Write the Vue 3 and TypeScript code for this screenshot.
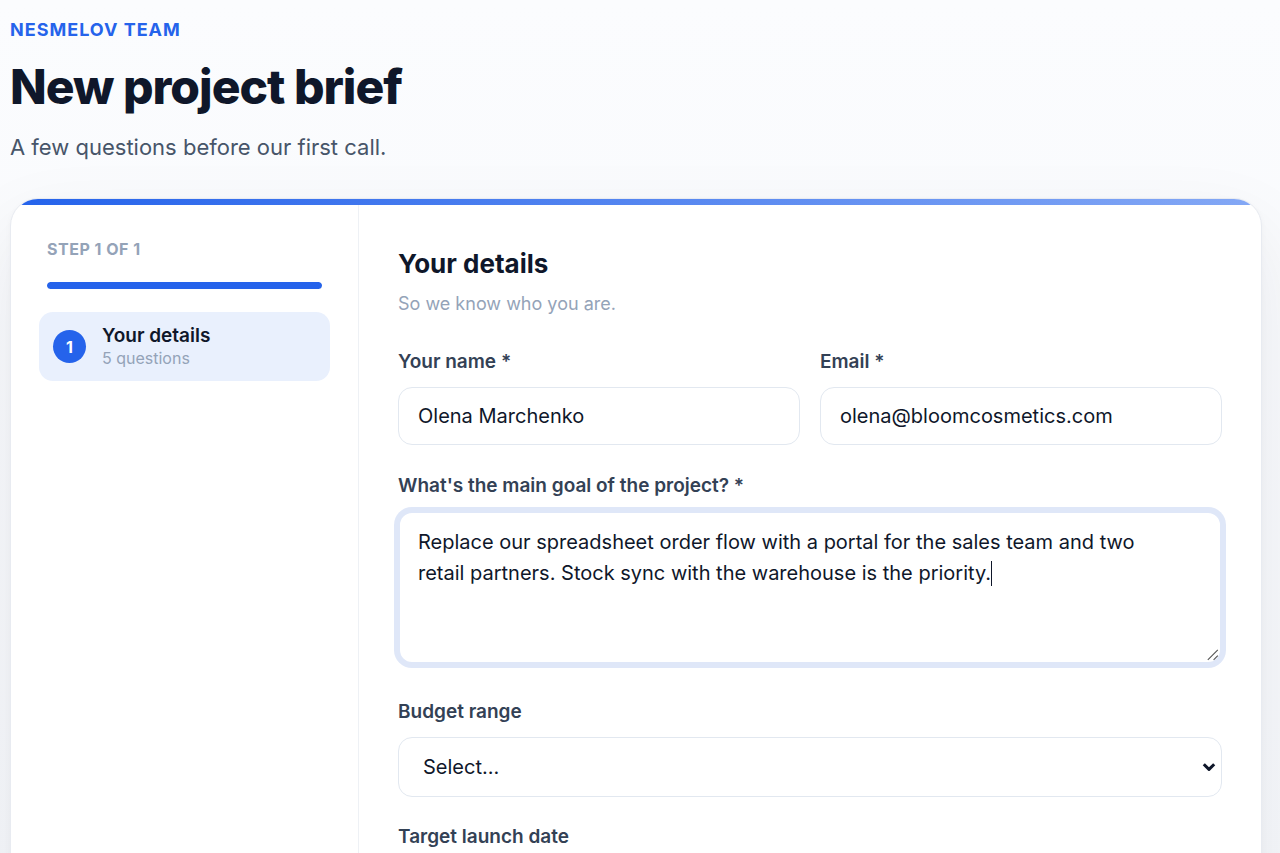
<script setup lang="ts">
import { ref } from 'vue'

interface Step {
  title: string
  note: string
}

const steps: Step[] = [{ title: 'Your details', note: '5 questions' }]
const current = ref(0)

const name = ref('Olena Marchenko')
const email = ref('olena@bloomcosmetics.com')
const goal = ref(
  'Replace our spreadsheet order flow with a portal for the sales team and two retail partners. Stock sync with the warehouse is the priority.',
)
const budget = ref('')
const launch = ref('')
</script>

<template>
  <div class="page">
    <header class="intro">
      <p class="brand">NESMELOV TEAM</p>
      <h1 class="title">New project brief</h1>
      <p class="lead">A few questions before our first call.</p>
    </header>

    <div class="card">
      <aside class="side">
        <p class="count">STEP {{ current + 1 }} OF {{ steps.length }}</p>
        <div class="track">
          <div class="fill" :style="{ width: ((current + 1) / steps.length) * 100 + '%' }"></div>
        </div>
        <nav>
          <button
            v-for="(step, i) in steps"
            :key="step.title"
            type="button"
            class="step"
            :class="{ active: i === current }"
            @click="current = i"
          >
            <span class="num">{{ i + 1 }}</span>
            <span class="step-text">
              <span class="step-title">{{ step.title }}</span>
              <span class="step-note">{{ step.note }}</span>
            </span>
          </button>
        </nav>
      </aside>

      <form class="main" @submit.prevent>
        <h2 class="heading">Your details</h2>
        <p class="hint">So we know who you are.</p>

        <div class="fields">
          <div class="row">
            <div class="field">
              <label for="name">Your name *</label>
              <input id="name" v-model="name" class="control" type="text" required />
            </div>
            <div class="field">
              <label for="email">Email *</label>
              <input id="email" v-model="email" class="control" type="email" required />
            </div>
          </div>

          <div class="field goal">
            <label for="goal">What's the main goal of the project? *</label>
            <div class="area-wrap">
              <textarea id="goal" v-model="goal" class="control area" required></textarea>
              <span class="caret"></span>
              <svg class="grip" viewBox="0 0 12 12" aria-hidden="true">
                <path d="M0.8 10.8 10.8 0.8M6.6 10.8 10.8 6.6" />
              </svg>
            </div>
          </div>

          <div class="field">
            <label for="budget">Budget range</label>
            <div class="select-wrap">
              <select id="budget" v-model="budget" class="control select">
                <option value="">Select...</option>
              </select>
              <svg class="chevron" viewBox="0 0 14 10" aria-hidden="true">
                <path d="M1.8 2.2 7 7.4 12.2 2.2" />
              </svg>
            </div>
          </div>

          <div class="field">
            <label for="launch">Target launch date</label>
            <input id="launch" v-model="launch" class="control" type="date" />
          </div>
        </div>
      </form>
    </div>
  </div>
</template>

<style>
body {
  background: #fafbfd;
}
</style>

<style scoped>
.page {
  box-sizing: border-box;
  min-height: 100vh;
  padding: 18px 18px 40px 10px;
  overflow: hidden;
  background: linear-gradient(180deg, #fbfcfe 0, #f6f8fb 900px);
  color: #0f172a;
  font-family: Inter, "Liberation Sans", sans-serif;
}

p,
h1,
h2 {
  margin: 0;
}

.brand {
  font-size: 18px;
  line-height: 24px;
  font-weight: 700;
  letter-spacing: 1px;
  color: #2563eb;
}

.title {
  margin-top: 16px;
  font-size: 48px;
  line-height: 58px;
  font-weight: 800;
  letter-spacing: -1px;
}

.lead {
  margin-top: 16px;
  font-size: 22px;
  line-height: 30px;
  color: #475569;
}

.card {
  position: relative;
  display: grid;
  grid-template-columns: 348px minmax(0, 1fr);
  margin-top: 36px;
  border: 1px solid #e8ebf1;
  border-radius: 28px;
  overflow: hidden;
  background: #fff;
  box-shadow:
    0 2px 6px rgba(15, 23, 42, 0.03),
    0 32px 80px rgba(15, 23, 42, 0.08);
}

.card::before {
  content: "";
  position: absolute;
  top: 0;
  left: 0;
  right: 0;
  height: 6px;
  background: linear-gradient(90deg, #2563eb, #84a8f5);
}

.side {
  box-sizing: border-box;
  padding: 38px 28px;
  border-right: 1px solid #eef1f5;
}

.count {
  padding: 0 8px;
  font-size: 16px;
  line-height: 24px;
  font-weight: 700;
  letter-spacing: 0.5px;
  color: #94a3b8;
}

.track {
  height: 7px;
  margin: 21px 8px 23px;
  border-radius: 4px;
  overflow: hidden;
  background: #e2e8f0;
}

.fill {
  height: 100%;
  border-radius: 4px;
  background: #2563eb;
}

.step {
  display: flex;
  align-items: center;
  gap: 16px;
  width: 100%;
  padding: 12px 14px;
  border: 0;
  border-radius: 14px;
  background: transparent;
  font-family: inherit;
  text-align: left;
}

.step.active {
  background: #e9f0fd;
}

.num {
  display: grid;
  place-items: center;
  width: 33px;
  height: 33px;
  border-radius: 50%;
  background: #2563eb;
  color: #fff;
  font-size: 16px;
  font-weight: 700;
}

.step-text {
  display: grid;
}

.step-title {
  font-size: 19px;
  line-height: 23px;
  font-weight: 600;
  color: #0f172a;
}

.step-note {
  font-size: 16px;
  line-height: 22px;
  color: #94a3b8;
}

.main {
  padding: 49px 39px;
}

.heading {
  font-size: 26px;
  line-height: 32px;
  font-weight: 700;
}

.hint {
  margin-top: 12px;
  font-size: 18px;
  line-height: 24px;
  color: #94a3b8;
}

.fields {
  display: grid;
  gap: 28px;
  margin-top: 34px;
}

.row {
  display: grid;
  grid-template-columns: 1fr 1fr;
  gap: 20px;
}

.field {
  display: grid;
  gap: 13px;
  min-width: 0;
}

.goal {
  margin: 1px 0 8px;
}

label {
  font-size: 19px;
  line-height: 24px;
  font-weight: 600;
  color: #334155;
}

.control {
  box-sizing: border-box;
  display: block;
  width: 100%;
  height: 58px;
  padding: 0 19px;
  border: 1px solid #e2e8f0;
  border-radius: 14px;
  outline: 0;
  background: #fff;
  color: #0f172a;
  font-family: inherit;
  font-size: 20px;
}

.area-wrap,
.select-wrap {
  position: relative;
}

.area {
  height: 153px;
  padding: 14px 40px 14px 18px;
  border: 2px solid #dfe7f8;
  box-shadow: 0 0 0 4px #dfe7f8;
  line-height: 31px;
  resize: none;
}

.caret {
  position: absolute;
  top: 50px;
  left: 593px;
  width: 1px;
  height: 25px;
  background: #0f172a;
}

.grip {
  position: absolute;
  right: 3px;
  bottom: 3px;
  width: 12px;
  height: 12px;
  fill: none;
  stroke: #555;
  stroke-width: 1.1;
}

.select {
  height: 60px;
  padding: 0 24px;
  appearance: none;
}

.chevron {
  position: absolute;
  top: 25px;
  right: 6px;
  width: 14px;
  height: 10px;
  fill: none;
  stroke: #0f172a;
  stroke-width: 3;
  stroke-linejoin: round;
  pointer-events: none;
}
</style>
